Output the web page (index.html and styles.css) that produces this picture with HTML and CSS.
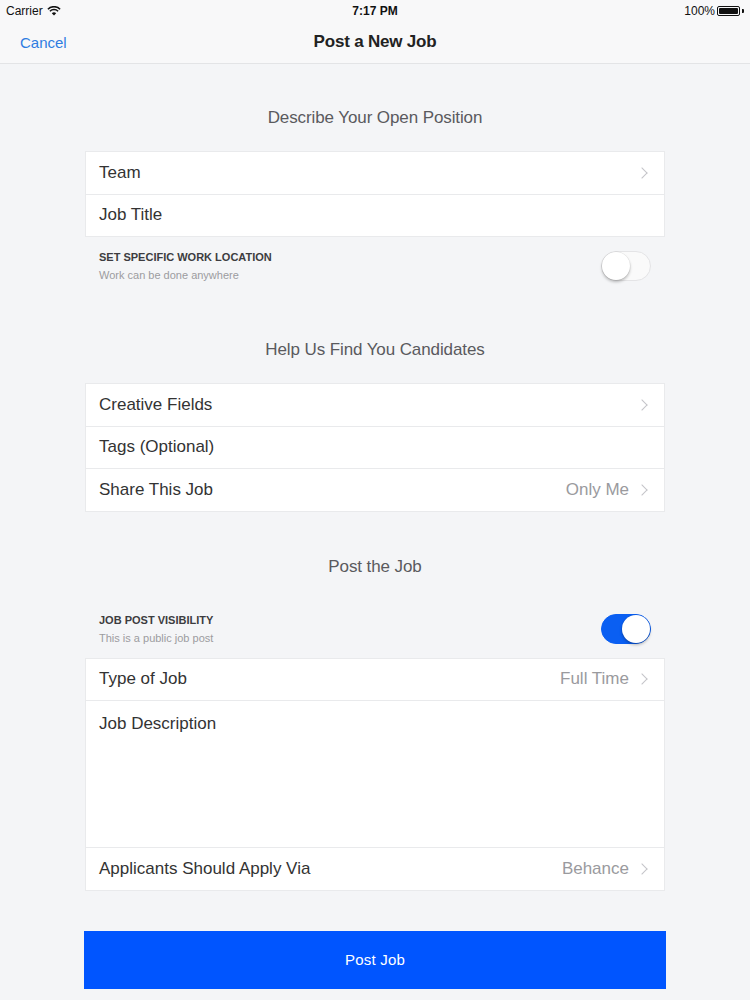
FILE: index.html
```html
<!DOCTYPE html>
<html>
<head>
<meta charset="utf-8">
<link rel="stylesheet" href="styles.css">
</head>
<body>
<header class="topbar">
  <div class="status">
    <div class="status-left">Carrier
      <svg class="wifi" width="14" height="10" viewBox="0 0 14 10"><path d="M7 9.5 L4.8 7.2 A3.2 3.2 0 0 1 9.2 7.2 Z" fill="#111"/><path d="M2.9 5.3 A5.8 5.8 0 0 1 11.1 5.3" stroke="#111" stroke-width="1.5" fill="none"/><path d="M0.9 3.2 A8.6 8.6 0 0 1 13.1 3.2" stroke="#111" stroke-width="1.5" fill="none"/></svg>
    </div>
    <div class="status-time">7:17 PM</div>
    <div class="status-right">100%
      <span class="battery"><span class="battery-fill"></span></span><span class="battery-tip"></span>
    </div>
  </div>
  <nav class="navbar">
    <a class="cancel">Cancel</a>
    <div class="nav-title">Post a New Job</div>
  </nav>
</header>
<main class="content">
  <h2 class="section-title first">Describe Your Open Position</h2>
  <div class="card">
    <div class="row"><span class="label">Team</span><span class="chev"></span></div>
    <div class="row"><span class="label">Job Title</span></div>
  </div>
  <div class="toggle-row">
    <div class="toggle-text">
      <div class="toggle-title">SET SPECIFIC WORK LOCATION</div>
      <div class="toggle-sub">Work can be done anywhere</div>
    </div>
    <div class="switch"><span class="knob"></span></div>
  </div>

  <h2 class="section-title">Help Us Find You Candidates</h2>
  <div class="card">
    <div class="row"><span class="label">Creative Fields</span><span class="chev"></span></div>
    <div class="row"><span class="label">Tags (Optional)</span></div>
    <div class="row"><span class="label">Share This Job</span><span class="value">Only Me</span><span class="chev"></span></div>
  </div>

  <h2 class="section-title">Post the Job</h2>
  <div class="toggle-row">
    <div class="toggle-text">
      <div class="toggle-title">JOB POST VISIBILITY</div>
      <div class="toggle-sub">This is a public job post</div>
    </div>
    <div class="switch on"><span class="knob"></span></div>
  </div>
  <div class="card">
    <div class="row"><span class="label">Type of Job</span><span class="value">Full Time</span><span class="chev"></span></div>
    <div class="row row-tall"><span class="label">Job Description</span></div>
    <div class="row"><span class="label">Applicants Should Apply Via</span><span class="value">Behance</span><span class="chev"></span></div>
  </div>

  <button class="post-btn">Post Job</button>
</main>
</body>
</html>
```

FILE: styles.css
```css
* { box-sizing: border-box; }
html, body { margin: 0; padding: 0; }
body {
  background: #f4f5f7;
  font-family: "Liberation Sans", Arial, sans-serif;
  color: #333;
  width: 750px;
  height: 1000px;
  overflow: hidden;
}
.topbar {
  background: #f8f8f9;
  border-bottom: 1px solid #e3e4e6;
}
.status {
  height: 21px;
  display: flex;
  align-items: center;
  justify-content: space-between;
  padding: 0 6px;
  font-size: 12px;
  color: #111;
  position: relative;
}
.status-left { display: flex; align-items: center; gap: 4px; }
.status-time {
  position: absolute;
  left: 0; right: 0;
  text-align: center;
  font-weight: bold;
  font-size: 12px;
}
.status-right { display: flex; align-items: center; gap: 2px; }
.battery {
  width: 23px; height: 10px;
  border: 1px solid #111;
  border-radius: 2px;
  padding: 1px;
  display: inline-flex;
}
.battery-fill { flex: 1; background: #111; border-radius: 1px; }
.battery-tip { width: 2px; height: 4px; background: #111; border-radius: 0 1px 1px 0; }
.navbar {
  height: 42px;
  display: flex;
  align-items: center;
  position: relative;
}
.cancel {
  color: #2f7de1;
  font-size: 15px;
  padding-left: 20px;
  position: relative;
  z-index: 1;
}
.nav-title {
  position: absolute;
  left: 0; right: 0;
  text-align: center;
  font-size: 17px;
  font-weight: bold;
  color: #222;
  letter-spacing: -0.2px;
}
.content {
  width: 580px;
  margin: 0 auto;
}
.section-title {
  margin: 0;
  padding: 45px 0 23px;
  line-height: 20px;
  font-size: 17px;
  font-weight: normal;
  color: #5a5a5e;
  text-align: center;
  letter-spacing: -0.1px;
}
.section-title.first { padding-top: 44px; }
.card {
  background: #fff;
  border: 1px solid #e9eaec;
  border-bottom: none;
}
.row {
  height: 42.5px;
  border-bottom: 1px solid #e9eaec;
  display: flex;
  align-items: center;
  padding: 0 14px 0 13px;
  font-size: 17px;
}
.row-tall {
  height: 147px;
  align-items: flex-start;
  padding-top: 13px;
}
.label { flex: 1; color: #333; }
.value { color: #9a9a9e; margin-right: 9px; }
.chev {
  width: 8px; height: 8px;
  border-right: 1.5px solid #c4c4c8;
  border-top: 1.5px solid #c4c4c8;
  transform: rotate(45deg);
  margin-right: 4px;
}
.toggle-row {
  height: 58px;
  display: flex;
  align-items: center;
  padding: 0 14px;
}
.toggle-text { flex: 1; }
.toggle-title {
  font-size: 11px;
  font-weight: bold;
  color: #3c3c40;
  line-height: 14px;
}
.toggle-sub {
  font-size: 11px;
  color: #9c9ca0;
  line-height: 14px;
  margin-top: 4px;
}
.switch {
  width: 50px; height: 30px;
  border-radius: 15px;
  background: #fafafa;
  border: 1px solid #e4e4e6;
  position: relative;
}
.switch .knob {
  position: absolute;
  top: 0; left: 0;
  width: 28px; height: 28px;
  border-radius: 50%;
  background: #fff;
  box-shadow: 0 2px 3px rgba(0,0,0,0.25), 0 0 0 0.5px rgba(0,0,0,0.08);
}
.switch.on {
  background: #0a5ff2;
  border-color: #0a5ff2;
}
.switch.on .knob { left: 20px; }
.post-btn {
  display: block;
  width: 582px;
  margin: 40px -1px 0;
  height: 58px;
  border: none;
  background: #0055ff;
  color: #fff;
  font-family: "Liberation Sans", Arial, sans-serif;
  font-size: 15px;
  font-weight: normal;
  letter-spacing: 0.2px;
}
```
